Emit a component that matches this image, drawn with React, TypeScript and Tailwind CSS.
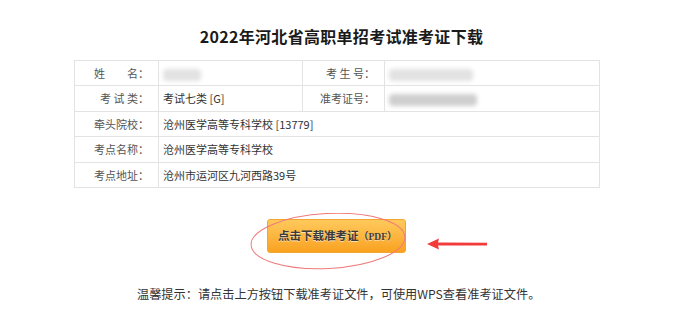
import React from 'react';

const FONT = { fontFamily: '"Microsoft YaHei", "Noto Sans CJK SC", "Noto Sans", sans-serif' };

// blurred private data
function Blur({ w, dark = false }: { w: number; dark?: boolean }) {
  return (
    <span
      className={`inline-block h-[12px] align-middle rounded-sm blur-[2px] ${dark ? 'bg-[#cfcfcf]' : 'bg-[#e2e2e2]'}`}
      style={{ width: w }}
    />
  );
}

type Row = { label: string; value: React.ReactNode; label2?: string; value2?: React.ReactNode };

const ROWS: Row[] = [
  { label: '姓　　名：', value: <Blur w={38} />, label2: '考 生 号：', value2: <Blur w={84} /> },
  { label: '考 试 类：', value: '考试七类  [G]', label2: '准考证号：', value2: <Blur w={88} dark /> },
  { label: '牵头院校：', value: '沧州医学高等专科学校  [13779]' },
  { label: '考点名称：', value: '沧州医学高等专科学校' },
  { label: '考点地址：', value: '沧州市运河区九河西路39号' },
];

export default function App() {
  return (
    <div className="w-[675px] h-[327px] bg-white overflow-hidden" style={FONT}>
      <h1 className="pt-[26px] pl-[8px] text-center text-[16px] leading-[20px] font-bold text-[#1a1a1a] tracking-[0.3px]">
        2022年河北省高职单招考试准考证下载
      </h1>

      <table className="mt-[14px] ml-[74px] w-[526px] border-collapse table-fixed text-[11px] text-[#444]">
        <colgroup>
          <col className="w-[84px]" />
          <col className="w-[144px]" />
          <col className="w-[82px]" />
          <col />
        </colgroup>
        <tbody>
          {ROWS.map((r, i) => (
            <tr key={i} className="h-[25.4px]">
              <td className="border border-[#e3e3e3] text-right pr-[9px] text-[#555]">{r.label}</td>
              {r.label2 ? (
                <>
                  <td className="border border-[#e3e3e3] pl-[4px] text-[#333]">{r.value}</td>
                  <td className="border border-[#e3e3e3] text-right pr-[9px] text-[#555]">{r.label2}</td>
                  <td className="border border-[#e3e3e3] pl-[4px] text-[#333]">{r.value2}</td>
                </>
              ) : (
                <td colSpan={3} className="border border-[#e3e3e3] pl-[4px] text-[#333]">{r.value}</td>
              )}
            </tr>
          ))}
        </tbody>
      </table>

      <div className="relative mt-[31px] flex justify-center pr-[2px]">
        <button className="w-[139px] h-[34px] pl-[2px] rounded-[3px] border border-[#f3a532] bg-gradient-to-b from-[#ffc95a] to-[#f9a21c] text-[11.5px] font-bold text-[#3a3a3a] [text-shadow:0_1px_0_rgba(255,255,255,0.6)]">
          点击下载准考证<span className="text-[10px]">（</span>
          <span className="text-[9.5px]" style={{ fontFamily: '"Liberation Serif", serif' }}>PDF</span>
          <span className="text-[10px]">）</span>
        </button>

        {/* annotation: ellipse + arrow */}
        <svg className="absolute left-[248px] top-[-6px]" width="250" height="60" viewBox="0 0 250 60">
          <ellipse cx="80" cy="28" rx="77" ry="27.5" fill="none" stroke="#f07a7a" strokeWidth="1" transform="rotate(-3 80 28)" />
          <path d="M179 31 L191 25.5 L190 29.6 L239 29.8 L239 32.4 L190 32.6 L191 36.5 Z" fill="#f23a3a" />
        </svg>
      </div>

      <p className="mt-[33px] pl-[137px] text-[12.2px] leading-[16px] text-[#333]">
        温馨提示：请点击上方按钮下载准考证文件，可使用WPS查看准考证文件。
      </p>
    </div>
  );
}
